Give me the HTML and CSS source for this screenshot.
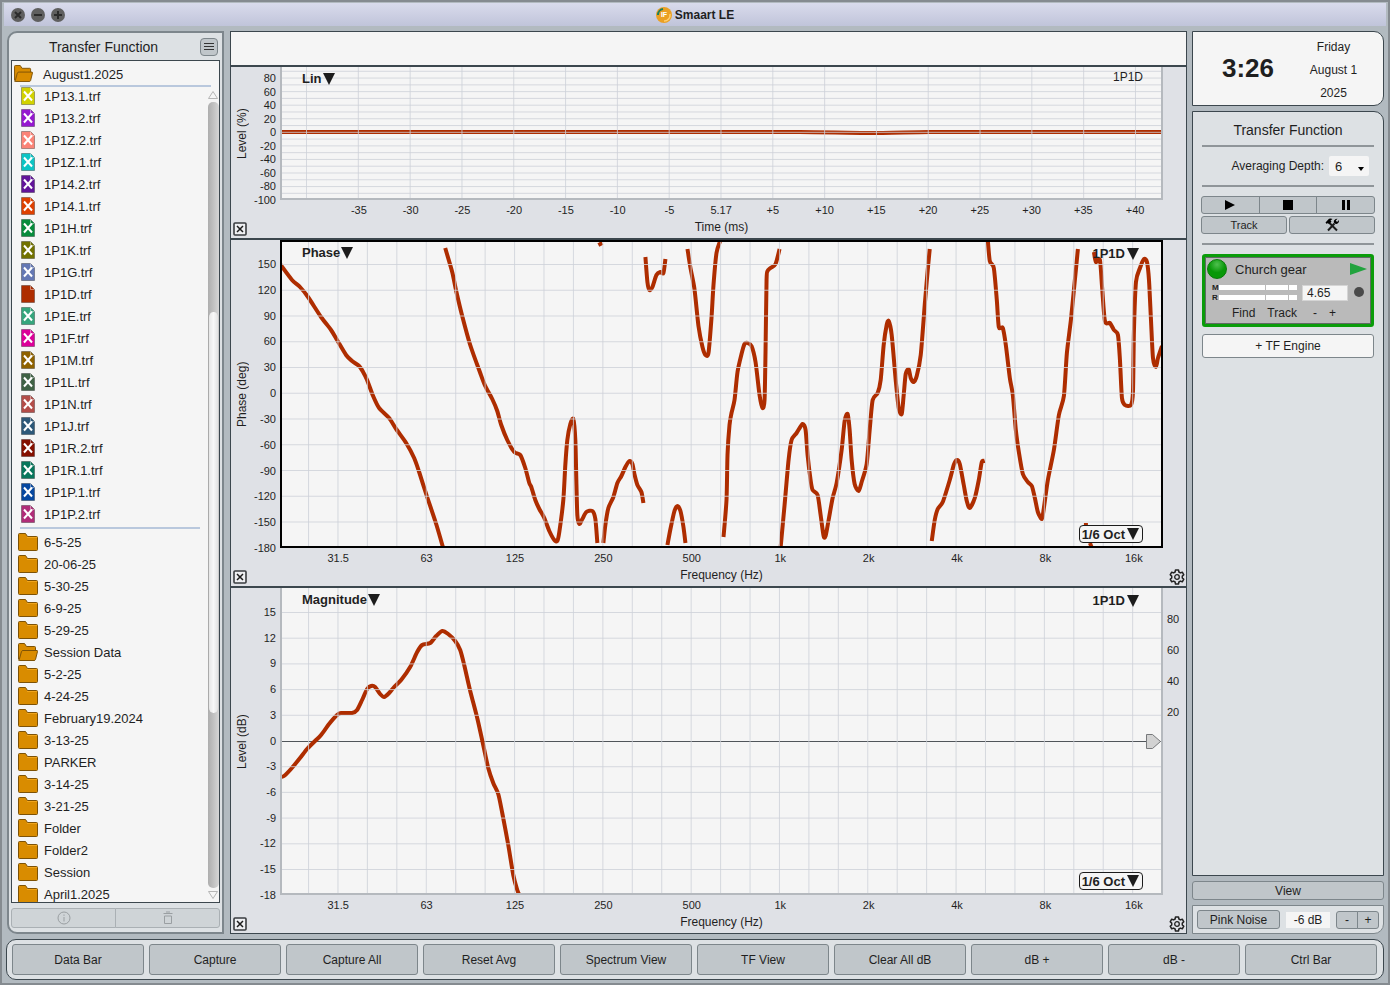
FILE: index.html
```html
<!DOCTYPE html>
<html lang="en">
<head>
    <meta charset="UTF-8">
    <title>Smaart LE</title>
    <link rel="stylesheet" href="styles.css">
</head>
<body>
    <!-- shared icons -->
    <svg class="sprite" aria-hidden="true">
        <symbol id="folder" viewBox="0 0 20 18">
            <path d="M.5 1.500q0-1 1-1h6l2 3h9q1 0 1 1v12q0 1-1 1h-17q-1 0-1-1z" fill="#d98c00" stroke="#7d5206"/>
            <path d="M9 4.500h10" stroke="#f0a51c"/>
        </symbol>
        <symbol id="folder-open" viewBox="0 0 20 18">
            <path d="M.5 16V1.500q0-1 1-1h5l2 3h8q1 0 1 1V8" fill="#d98c00" stroke="#7d5206"/>
            <path d="M1 17.500 3.500 8.500q.4-1 1.500-1h14q.7 0 .5 1L17.500 16.500q-.3 1-1.500 1H1.500q-1 0-1-1" fill="#d98c00" stroke="#7d5206"/>
        </symbol>
        <symbol id="close" viewBox="0 0 14 14">
            <rect x="1" y="1" width="12" height="12" rx="1" fill="#eeeff2" stroke="#3a3d40" stroke-width="1.600"/>
            <path d="M4 4l6 6M10 4l-6 6" stroke="#1c1c1c" stroke-width="1.500"/>
        </symbol>
        <symbol id="gear" viewBox="0 0 16 16">
            <path d="M6.500 1h3l.4 2 1.500.9 1.900-.7 1.500 2.600L13.300 7.100v1.800l1.500 1.300-1.500 2.600-1.900-.7-1.500.9-.4 2h-3l-.4-2-1.500-.9-1.900.7-1.500-2.600L2.700 8.900V7.100L1.200 5.800l1.500-2.600 1.900.7L6.100 3z" fill="none" stroke="#222" stroke-width="1.500" stroke-linejoin="round"/>
            <circle cx="8" cy="8" r="2.300" fill="none" stroke="#222" stroke-width="1.300"/>
        </symbol>
        <symbol id="down" viewBox="0 0 12 12">
            <path d="M0 0h12L6 12z" fill="#1c1c1c"/>
        </symbol>
    </svg>

    <header class="titlebar">
        <div class="window-buttons">
            <button aria-label="Close"><svg viewBox="0 0 14 14"><path d="M4 4l6 6M10 4l-6 6"/></svg></button>
            <button aria-label="Minimize"><svg viewBox="0 0 14 14"><path d="M3 7h8"/></svg></button>
            <button aria-label="Zoom"><svg viewBox="0 0 14 14"><path d="M3 7h8M7 3v8"/></svg></button>
        </div>
        <h1>
            <svg class="logo" viewBox="0 0 16 16">
                <circle cx="8" cy="8" r="8" fill="#eba023"/>
                <path d="M2 8a6 6 0 0 1 5-6" fill="none" stroke="#1b7f5f" stroke-width="2"/>
                <path d="M14 7a6 6 0 0 1-6 7" fill="none" stroke="#ffd070" stroke-width="1.500"/>
                <text x="8" y="10" text-anchor="middle">IF</text>
            </svg>
            Smaart LE
        </h1>
    </header>

    <main>
        <aside class="data-bar">
            <div class="data-head">
                <h2>Transfer Function</h2>
                <button class="menu" aria-label="Menu"><svg viewBox="0 0 10 10"><path d="M0 1.500h10M0 4.500h10M0 7.500h10"/></svg></button>
            </div>
            <div class="browser">
                <div class="session"><svg><use href="#folder-open"/></svg>August1.2025</div>
                <div class="scroll-area">
                    <div class="lists">
                        <ul id="files"></ul>
                        <ul id="folders"></ul>
                    </div>
                    <div class="scrollbar">
                        <svg viewBox="0 0 10 8"><path d="M5 .5 9.500 7.500H.5z"/></svg>
                        <div class="track"><div class="thumb"></div></div>
                        <svg viewBox="0 0 10 8"><path d="M5 7.500 9.500.5H.5z"/></svg>
                    </div>
                </div>
            </div>
            <div class="data-tools">
                <button disabled aria-label="Info"><svg viewBox="0 0 14 14"><circle cx="7" cy="7" r="6"/><path d="M7 6v4.500M7 3.500v1.300"/></svg></button>
                <button disabled aria-label="Delete"><svg viewBox="0 0 14 14"><path d="M2.500 2.500h9M5 1h4M3.500 5v7.500h7V5z"/></svg></button>
            </div>
        </aside>

        <section class="graphs">
            <div class="cursor-readout"></div>

            <div class="plot plot-lin">
                <div class="y-axis">
                    <span class="y-name">Level (%)</span>
                    <div class="y-ticks" data-ticks="80 60 40 20 0 -20 -40 -60 -80 -100"></div>
                </div>
                <div class="chart">
                    <svg id="lin" viewBox="281 67 882 133" preserveAspectRatio="none"></svg>
                    <button class="graph-type">Lin<svg><use href="#down"/></svg></button>
                    <span class="trace-name">1P1D</span>
                </div>
                <div class="x-ticks time" data-ticks="-35 -30 -25 -20 -15 -10 -5 5.17 +5 +10 +15 +20 +25 +30 +35 +40"></div>
                <button class="close" aria-label="Close graph"><svg><use href="#close"/></svg></button>
                <span class="x-name">Time (ms)</span>
            </div>

            <div class="plot selected">
                <div class="y-axis">
                    <span class="y-name">Phase (deg)</span>
                    <div class="y-ticks" data-ticks="150 120 90 60 30 0 -30 -60 -90 -120 -150 -180"></div>
                </div>
                <div class="chart">
                    <svg id="phase" viewBox="281 240 882 308" preserveAspectRatio="none"></svg>
                    <button class="graph-type">Phase<svg><use href="#down"/></svg></button>
                    <button class="trace">1P1D<svg><use href="#down"/></svg></button>
                    <button class="smoothing">1/6 Oct<svg><use href="#down"/></svg></button>
                </div>
                <div class="x-ticks" data-ticks="31.5 63 125 250 500 1k 2k 4k 8k 16k"></div>
                <button class="close" aria-label="Close graph"><svg><use href="#close"/></svg></button>
                <span class="x-name">Frequency (Hz)</span>
                <button class="gear" aria-label="Settings"><svg><use href="#gear"/></svg></button>
            </div>

            <div class="plot">
                <div class="y-axis">
                    <span class="y-name">Level (dB)</span>
                    <div class="y-ticks" data-ticks="15 12 9 6 3 0 -3 -6 -9 -12 -15 -18"></div>
                </div>
                <div class="chart">
                    <svg id="magnitude" viewBox="281 588 882 307" preserveAspectRatio="none"></svg>
                    <svg class="marker" viewBox="0 0 15 15"><path d="M.5.5h6L14.500 7.500 6.500 14.500h-6z"/></svg>
                    <button class="graph-type">Magnitude<svg><use href="#down"/></svg></button>
                    <button class="trace">1P1D<svg><use href="#down"/></svg></button>
                    <button class="smoothing">1/6 Oct<svg><use href="#down"/></svg></button>
                </div>
                <div class="coherence" data-ticks="80 60 40 20"></div>
                <div class="x-ticks" data-ticks="31.5 63 125 250 500 1k 2k 4k 8k 16k"></div>
                <button class="close" aria-label="Close graph"><svg><use href="#close"/></svg></button>
                <span class="x-name">Frequency (Hz)</span>
                <button class="gear" aria-label="Settings"><svg><use href="#gear"/></svg></button>
            </div>
        </section>

        <aside class="control-bar">
            <div class="clock">
                <strong>3:26</strong>
                <div class="date"><span>Friday</span><span>August 1</span><span>2025</span></div>
            </div>
            <div class="controls">
                <h2>Transfer Function</h2>
                <hr>
                <div class="averaging">
                    <label for="depth">Averaging Depth:</label>
                    <div class="select">
                        <select id="depth"><option>6</option><option>8</option><option>16</option></select>
                        <svg viewBox="0 0 6 4"><path d="M0 0h6L3 4z"/></svg>
                    </div>
                </div>
                <hr>
                <div class="transport">
                    <button aria-label="Play"><svg viewBox="0 0 10 10"><path d="M0 0l10 5-10 5z"/></svg></button>
                    <button aria-label="Stop"><svg viewBox="0 0 10 10"><path d="M0 0h10v10H0z"/></svg></button>
                    <button aria-label="Pause"><svg viewBox="0 0 10 10"><path d="M1 0h3v10H1zM6 0h3v10H6z"/></svg></button>
                </div>
                <div class="tools">
                    <button>Track</button>
                    <button aria-label="Tools">
                        <svg viewBox="0 0 14 14">
                            <path d="M3 12.500 9.500 5.500M4 4.500l8 8" fill="none" stroke="#1c1c1c" stroke-width="2"/>
                            <path d="M.5 4.500 4 .8q2-.8 3.500.2L5.500 2.500l1 1.200L4 6 2.800 4.900 1.800 6z"/>
                            <path d="M12.500.8 10.800 2.600l.6 1 1.100.2L14 2q.3 3-1.800 3.800-1.700.5-2.800-.6Q8.300 4 9.200 2.300 10.300.5 12.500.8z"/>
                        </svg>
                    </button>
                </div>
                <hr>
                <div class="engine">
                    <div class="engine-top">
                        <span class="led"></span>
                        <span class="engine-name">Church gear</span>
                        <button aria-label="Run"><svg viewBox="0 0 17 12"><path d="M0 0l17 6-17 6z" fill="#22a33e"/></svg></button>
                    </div>
                    <div class="engine-mid">
                        <div class="meters">
                            <b>M</b><i></i>
                            <b>R</b><i></i>
                        </div>
                        <input type="text" value="4.65" aria-label="Delay">
                        <span class="dot"></span>
                    </div>
                    <div class="engine-bottom">
                        <button>Find</button><button>Track</button><button>-</button><button>+</button>
                    </div>
                </div>
                <button class="add-engine">+ TF Engine</button>
            </div>
            <button class="view">View</button>
            <div class="generator">
                <button>Pink Noise</button>
                <output>-6 dB</output>
                <div class="step"><button>-</button><button>+</button></div>
            </div>
        </aside>
    </main>

    <footer>
        <button>Data Bar</button>
        <button>Capture</button>
        <button>Capture All</button>
        <button>Reset Avg</button>
        <button>Spectrum View</button>
        <button>TF View</button>
        <button>Clear All dB</button>
        <button>dB +</button>
        <button>dB -</button>
        <button>Ctrl Bar</button>
    </footer>

    <script src="script.js"></script>
</body>
</html>
```
FILE: styles.css
```css
* {
    box-sizing: border-box;
}

body {
    margin: 0;
    height: 100vh;
    display: flex;
    flex-direction: column;
    padding: 1px 4px 3px;
    border: 2px solid #858b90;
    background-color: #b2bac0;
    font-family: "Liberation Sans", Arial, sans-serif;
    font-size: 13px;
    color: #1f1f1f;
}

h1, h2, ul {
    margin: 0;
    padding: 0;
}

button, input, select {
    font: inherit;
    color: inherit;
    padding: 0;
    margin: 0;
}

button {
    display: flex;
    align-items: center;
    justify-content: center;
    background-color: #c0c6ca;
    border: 1px solid #7d868b;
    border-radius: 3px;
}

svg {
    display: block;
}

.sprite {
    position: absolute;
    width: 0;
    height: 0;
}

/* title bar */
.titlebar {
    flex: none;
    height: 23px;
    display: grid;
    grid-template-columns: 1fr auto 1fr;
    align-items: center;
    margin: 0 -2px 5px;
    padding: 0 7px;
    background: linear-gradient(#d9dbec, #c0c4da);
}

.window-buttons {
    display: flex;
    gap: 6px;
}

.window-buttons button {
    width: 14px;
    height: 14px;
    border: none;
    border-radius: 50%;
    background-color: #5f5f5f;
}

.window-buttons svg {
    width: 14px;
    height: 14px;
    stroke: #2b2b2b;
    stroke-width: 2;
}

.titlebar h1 {
    display: flex;
    align-items: center;
    gap: 3px;
    font-size: 12px;
}

.logo {
    width: 16px;
    height: 16px;
    font-size: 7px;
    font-weight: bold;
    fill: #fff;
}

main {
    flex: 1;
    min-height: 0;
    display: grid;
    grid-template-columns: 219px 1fr 192px;
    gap: 5px;
}

/* left side */
.data-bar {
    display: flex;
    flex-direction: column;
    min-height: 0;
    margin: 0 1px 0 1px;
    padding: 0 2px 4px;
    background-color: #dde1e4;
    border: 2px solid #7d868c;
    border-radius: 10px 0 0 10px;
}

.data-head {
    flex: none;
    display: flex;
    align-items: center;
    height: 27px;
    padding-right: 2px;
}

h2 {
    flex: 1;
    text-align: center;
    font-size: 14px;
    font-weight: normal;
}

.data-head h2 {
    padding-right: 4px;
}

.menu {
    width: 18px;
    height: 18px;
    border-radius: 4px;
}

.menu svg {
    width: 10px;
    height: 10px;
    stroke: #333;
}

.browser {
    flex: 1;
    min-height: 0;
    display: flex;
    flex-direction: column;
    background-color: #f5f5f5;
    border: 1px solid #3c474e;
}

.session {
    display: flex;
    align-items: center;
    gap: 10px;
    flex: none;
    height: 26px;
    margin: 0 8px 0 0;
    padding-left: 2px;
    background: linear-gradient(#b9c8dd, #b9c8dd) 8px 100% / 100% 2px no-repeat;
}

.session svg {
    width: 19px;
    height: 17px;
    margin-bottom: 2px;
}

.scroll-area {
    flex: 1;
    min-height: 0;
    display: flex;
}

.lists {
    flex: 1;
    margin-top: -2px;
    overflow: hidden;
}

.lists ul {
    list-style: none;
}

.lists li {
    display: flex;
    align-items: center;
    gap: 6px;
    height: 22px;
    padding-left: 6px;
}

#files li {
    gap: 9px;
    padding-left: 9px;
}

#files {
    margin: 0 8px 2px 0;
    padding-bottom: 4px;
    background: linear-gradient(#b9c8dd, #b9c8dd) 8px 100% / 100% 2px no-repeat;
}

#folders svg {
    width: 20px;
    height: 18px;
}

#files svg {
    width: 14px;
    height: 18px;
}

.scrollbar {
    display: flex;
    flex-direction: column;
    width: 11px;
    padding: 4px 0 3px;
}

.scrollbar svg {
    width: 10px;
    height: 8px;
    fill: none;
    stroke: #b5b5b5;
}

.track {
    flex: 1;
    margin: 3px 0;
    border-radius: 5px;
    background: linear-gradient(90deg, #adadad, #d6d6d6);
}

.thumb {
    height: 51%;
    margin-top: 210px;
    border-radius: 5px;
    border-left: 1px solid #aaa;
    border-right: 1px solid #ccc;
    background: linear-gradient(90deg, #e6e6e6, #f8f8f8, #e2e2e2);
}

.data-tools {
    flex: none;
    display: flex;
    margin-top: 5px;
}

.data-tools button {
    flex: 1;
    height: 20px;
    background-color: #cfd4d7;
    border-color: #aab0b4;
}

.data-tools svg {
    width: 14px;
    height: 14px;
    fill: none;
    stroke: #9a9fa2;
}

.data-tools button:first-child, .step button:first-child {
    border-radius: 3px 0 0 3px;
}

.data-tools button:last-child, .step button:last-child {
    margin-left: -1px;
    border-radius: 0 3px 3px 0;
}

/* graphs */
.graphs {
    display: grid;
    grid-template-rows: 35px 171fr 348fr 347fr;
    min-height: 0;
    background-color: #dfe1e6;
    border: 1px solid #3c474e;
}

.cursor-readout {
    background-color: #f5f5f5;
    border-bottom: 2px solid #3c474e;
}

.plot {
    display: grid;
    grid-template-columns: 49px 1fr 23px;
    grid-template-rows: 1fr 20px 18px;
    min-height: 0;
    font-size: 11px;
}

.plot + .plot {
    border-top: 2px solid #3c474e;
}

.y-axis {
    display: flex;
    min-height: 0;
}

.y-name {
    width: 22px;
    display: flex;
    align-items: center;
    justify-content: center;
    writing-mode: vertical-rl;
    transform: rotate(180deg);
    font-size: 12px;
}

.y-ticks {
    flex: 1;
    display: flex;
    flex-direction: column;
    justify-content: space-between;
    margin: 17px 4px -7px 0;
    line-height: 14px;
    text-align: right;
}

.plot-lin .y-ticks {
    margin-top: 5px;
    line-height: 13px;
}

.chart {
    position: relative;
    min-height: 0;
    overflow: hidden;
    background-color: #f5f5f5;
    border: 2px solid #b5b9be;
    border-top: none;
    font-size: 13px;
}

.selected .chart {
    border: 2px solid #000;
}

.chart > svg:first-child {
    position: absolute;
    top: 0;
    left: -2px;
    width: calc(100% + 4px);
    height: calc(100% + 2px);
}

.selected .chart > svg:first-child {
    top: -2px;
    height: calc(100% + 4px);
}

.chart path, .chart line {
    vector-effect: non-scaling-stroke;
}

.curve {
    fill: none;
    stroke: #ae2d00;
    stroke-width: 4;
}

.grid {
    stroke: #cdd1d8;
    stroke-opacity: 0.8;
}

.zero {
    stroke: #50555a;
    shape-rendering: crispEdges;
}

.chart button {
    position: absolute;
    gap: 1px;
    background: none;
    border: none;
    font-weight: bold;
}

.chart button svg {
    width: 12px;
    height: 12px;
}

.chart .graph-type {
    top: 4px;
    left: 20px;
}

.chart .trace {
    top: 5px;
    right: 22px;
    gap: 2px;
}

.selected .graph-type, .selected .trace {
    margin-top: -1px;
}

.trace-name {
    position: absolute;
    top: 3px;
    right: 18px;
    font-size: 12px;
}

.chart .smoothing {
    right: 18px;
    bottom: 3px;
    height: 18px;
    padding: 0 3px 0 2px;
    gap: 2px;
    background-color: #f5f5f5;
    border: 1px solid #1c1c1c;
    border-radius: 4px;
}

.marker {
    position: absolute;
    top: 50%;
    right: 0;
    width: 15px;
    height: 15px;
    margin-top: -7px;
    fill: #d2d2d2;
    stroke: #77797b;
}

.coherence {
    display: flex;
    flex-direction: column;
    gap: 17px;
    margin-top: 24px;
    padding-left: 4px;
    line-height: 14px;
}

.x-ticks {
    grid-row: 2;
    grid-column: 1 / -1;
    display: grid;
    grid-template-columns: repeat(10, 1fr);
    padding: 0 8px 0 63px;
    line-height: 20px;
    text-align: center;
}

.x-ticks.time {
    grid-template-columns: repeat(16, 1fr);
    padding: 0 25px 0 102px;
}

.x-name {
    grid-row: 3;
    grid-column: 2;
    text-align: center;
    line-height: 14px;
    font-size: 12px;
}

.close, .gear {
    grid-row: 3;
    background: none;
    border: none;
    align-items: flex-start;
}

.close {
    grid-column: 1;
    justify-content: flex-start;
    padding: 2px 0 0 2px;
}

.close svg {
    width: 14px;
    height: 14px;
}

.gear {
    grid-column: 3;
    padding: 1px 0 0 4px;
}

.gear svg {
    width: 16px;
    height: 16px;
}

/* right side */
.control-bar {
    display: flex;
    flex-direction: column;
    gap: 5px;
    min-height: 0;
}

.clock {
    display: flex;
    align-items: center;
    height: 75px;
    padding-left: 14px;
    background-color: #f5f5f5;
    border: 1px solid #3c474e;
    border-radius: 0 10px 10px 0;
}

.clock strong {
    width: 82px;
    text-align: center;
    font-size: 26px;
}

.date {
    flex: 1;
    display: flex;
    flex-direction: column;
    padding: 4px 5px 0 0;
    text-align: center;
    line-height: 23px;
    font-size: 12px;
}

.controls {
    flex: 1;
    min-height: 0;
    display: flex;
    flex-direction: column;
    padding: 8px 9px 0;
    background-color: #dde1e4;
    border: 1px solid #3c474e;
    border-radius: 0 10px 0 0;
}

.controls h2 {
    flex: none;
    line-height: 21px;
}

.controls hr {
    width: 100%;
    margin: 4px 0 9px;
    border: none;
    border-top: 2px solid #8f9599;
}

.averaging {
    display: flex;
    align-items: center;
    justify-content: flex-end;
    gap: 5px;
    height: 20px;
    margin-bottom: 5px;
    padding-right: 5px;
    font-size: 12px;
}

.select {
    position: relative;
}

.select select {
    width: 40px;
    height: 20px;
    padding-left: 6px;
    appearance: none;
    border: none;
    border-radius: 2px;
    background-color: #f5f5f5;
    font-size: 13px;
}

.select svg {
    position: absolute;
    right: 5px;
    bottom: 5px;
    width: 6px;
    height: 4px;
}

.transport {
    display: flex;
    margin: 0 -1px 2px;
}

.transport button {
    flex: 1;
    height: 18px;
    border-radius: 0;
}

.transport button + button {
    margin-left: -1px;
}

.transport button:first-child {
    border-radius: 3px 0 0 3px;
}

.transport button:last-child {
    border-radius: 0 3px 3px 0;
}

.transport svg {
    width: 10px;
    height: 10px;
}

.tools {
    display: flex;
    gap: 2px;
    margin: 0 -1px 5px;
}

.tools button {
    flex: 1;
    height: 18px;
    font-size: 11px;
}

.tools svg {
    width: 14px;
    height: 14px;
}

.engine {
    display: flex;
    flex-direction: column;
    height: 73px;
    padding: 1px 4px;
    background-color: #bababa;
    border: 3px solid #0a9c0a;
    border-radius: 3px;
    box-shadow: inset 0 0 0 1px #5f6a64;
}

.engine button {
    background: none;
    border: none;
}

.engine-top {
    display: flex;
    align-items: center;
    height: 22px;
}

.led {
    width: 20px;
    height: 20px;
    margin-left: -2px;
    border-radius: 50%;
    border: 1px solid #077a07;
    background: radial-gradient(circle at 50% 25%, #4fc04f, #089808 50%);
}

.engine-name {
    flex: 1;
    padding-left: 8px;
}

.engine-top svg {
    width: 17px;
    height: 12px;
}

.engine-mid {
    display: flex;
    align-items: center;
    height: 24px;
    padding-left: 3px;
}

.meters {
    display: grid;
    grid-template-columns: 7px 78px;
    row-gap: 5px;
    line-height: 5px;
    font-size: 8px;
}

.meters i {
    height: 5px;
    background: linear-gradient(90deg, #fff 46px, #bababa 46px, #bababa 47px, #fff 47px, #fff 69px, #bababa 69px, #bababa 70px, #fff 70px);
}

.engine-mid input {
    width: 46px;
    height: 16px;
    margin: 2px 6px 0 5px;
    padding-left: 4px;
    border: 1px solid #d5d5d5;
    background-color: #f5f5f5;
    font-size: 12px;
}

.dot {
    width: 10px;
    height: 10px;
    border-radius: 50%;
    background-color: #4a4a4a;
}

.engine-bottom {
    display: flex;
    gap: 12px;
    padding: 1px 0 0 23px;
    line-height: 16px;
    font-size: 12px;
}

.engine-bottom button:nth-child(3) {
    padding-left: 4px;
}

.add-engine {
    flex: none;
    height: 24px;
    margin-top: 7px;
    background-color: #f5f5f5;
    font-size: 12px;
}

.view {
    flex: none;
    height: 19px;
    font-size: 12px;
}

.generator {
    flex: none;
    display: flex;
    align-items: center;
    justify-content: space-between;
    height: 29px;
    padding: 0 4px;
    background-color: #dde1e4;
    border: 1px solid #7d868b;
    border-radius: 0 0 10px 0;
    font-size: 12px;
}

.generator > button {
    width: 83px;
    height: 19px;
}

.generator output {
    width: 44px;
    line-height: 16px;
    text-align: center;
    background-color: #f5f5f5;
}

.step {
    display: flex;
}

.step button {
    width: 22px;
    height: 18px;
}

footer {
    flex: none;
    display: flex;
    gap: 5px;
    height: 41px;
    margin-top: 5px;
    padding: 4px 6px 4px 5px;
    background-color: #dde1e4;
    border: 1px solid #3c474e;
    border-radius: 10px;
}

footer button {
    flex: 1;
    font-size: 12px;
}
```
FILE: script.js
```js
const files = [
    ['1P13.1.trf', '#d2d200'], ['1P13.2.trf', '#9518d0'], ['1P1Z.2.trf', '#fb8377'],
    ['1P1Z.1.trf', '#0cc4c4'], ['1P14.2.trf', '#62149a'], ['1P14.1.trf', '#de4000'],
    ['1P1H.trf', '#078c3c'], ['1P1K.trf', '#727200'], ['1P1G.trf', '#6478b4'],
    ['1P1D.trf', '#ae2d00'], ['1P1E.trf', '#35a57c'], ['1P1F.trf', '#dc0099'],
    ['1P1M.trf', '#8f6200'], ['1P1L.trf', '#3f6245'], ['1P1N.trf', '#b34d49'],
    ['1P1J.trf', '#2d5878'], ['1P1R.2.trf', '#851000'], ['1P1R.1.trf', '#08775c'],
    ['1P1P.1.trf', '#0648a0'], ['1P1P.2.trf', '#b02c78']
];

const folders = [
    '6-5-25', '20-06-25', '5-30-25', '6-9-25', '5-29-25', 'Session Data', '5-2-25', '4-24-25',
    'February19.2024', '3-13-25', 'PARKER', '3-14-25', '3-21-25', 'Folder', 'Folder2', 'Session', 'April1.2025'
];

// 1P1D is the one shown in the graphs, so it has no X
document.getElementById('files').innerHTML = files.map(([name, color]) => `
    <li><svg viewBox="0 0 14 18">
        <path d="M.5.5h9l4 4v13H.5z" fill="${color}" stroke="#000" stroke-opacity=".3"/>
        <path d="M9.500.5v4h4" fill="none" stroke="#fff" stroke-opacity=".45"/>
        ${name === '1P1D.trf' ? '' : '<path d="M3 4.500l8 9M11 4.500l-8 9" stroke="#fff" stroke-width="2"/>'}
    </svg>${name}</li>`).join('');

document.getElementById('folders').innerHTML = folders.map(name =>
    `<li><svg><use href="#${name === 'Session Data' ? 'folder-open' : 'folder'}"/></svg>${name}</li>`).join('');

document.querySelectorAll('[data-ticks]').forEach(el => {
    el.innerHTML = el.dataset.ticks.split(' ').map(t => `<span>${t}</span>`).join('');
});

const phase = [
    '281,264 293,280 301,287 309,297 322,317 332,330 338,340 347,355 353,361 360,366 364,372 368,380 374,396 380,408 390,418 397,429 407,443 415,458 420,472 427,494 437,524 444,548',
    '446,248 453,272 457,291 463,316 471,345 481,373 486,386 493,399 498,411 502,425 508,440 515,452 521,455 526,468 530,483 532,487 536,500 540,509 545,518 550,531 555,540 558,541 560,532 564,500 566,465 568,440 571,424 574,419 576,440 577,480 578,515 580,524 583,519 587,512 593,511 596,519 598,543',
    '604,543 606,525 609,508 614,497 618,483 622,476 626,467 630,461 633,464 635,474 638,485 642,492 644,503',
    '599,245 603,243',
    '646,257 648,282 650,290 653,287 657,275 661,272 664,273 666,259',
    '668,545 671,529 675,511 678,506 681,511 684,527 686,543',
    '688,249 691,268 695,289 699,326 703,347 706,355 709,353 712,318 714,285 717,253 721,240',
    '724,537 727,500 728,455 730,425 732,413 735,400 738,372 742,354 745,344 748,343 752,346 756,362 760,395 763,408 765,400 766,350 767,280 768,271 771,268 776,264 780,249',
    '781,548 785,505 789,460 792,440 797,433 803,424 806,430 808,455 811,480 813,490 818,495 821,515 824,536 826,536 829,520 833,498 837,483 842,450 845,421 848,414 850,430 852,460 855,484 859,491 862,482 867,464 870,430 873,400 878,393 881,380 884,345 887,325 889,321 892,335 896,380 899,408 902,414 904,395 906,374 909,369 911,378 914,382 917,376 921,355 925,305 928,270 930,249',
    '932,541 935,520 938,509 943,502 950,480 954,465 957,460 960,464 964,485 967,501 970,508 975,498 979,480 982,462 985,461',
    '988,240 990,261 994,268 997,300 999,327 1003,328 1006,345 1010,378 1013,395 1016,430 1019,452 1023,474 1028,482 1032,486 1035,498 1038,512 1042,519 1044,508 1048,480 1054,450 1059,415 1064,396 1067,353 1071,320 1074,290 1078,249',
    '1094,252 1096,262 1100,260 1102,285 1105,321 1110,323 1114,330 1118,335 1120,360 1122,398 1125,405 1131,405 1133,392 1134,330 1136,282 1140,268 1144,259 1147,262 1149,280 1151,320 1153,358 1156,367 1158,358 1162,346',
    '1084,525 1088,525',
    '1090,543 1092,548'
];

const magnitude = [
    '281,777 285,776 292,769 301,758 308,749 316,741 322,735 330,724 338,715 342,713 353,713 358,710 363,700 368,689 372,686 376,687 381,694 385,697 390,693 395,687 402,680 411,667 418,652 423,645 431,643 437,636 443,631 449,634 456,641 461,650 465,665 471,691 478,718 484,745 489,768 494,783 499,794 503,813 509,845 514,875 518,890 521,897'
];

const lin = ['281,132 500,132 700,132 800,132 870,133 930,132 1000,132 1163,132'];

// smooth curve through all the points
function curve(text) {
    const p = text.split(' ').map(s => s.split(',').map(Number));
    let d = `M${p[0]}`;
    for (let i = 0; i < p.length - 1; i++) {
        const a = p[i - 1] || p[i], b = p[i], c = p[i + 1], e = p[i + 2] || c;
        d += `C${b[0] + (c[0] - a[0]) / 8},${b[1] + (c[1] - a[1]) / 8} ${c[0] - (e[0] - b[0]) / 8},${c[1] - (e[1] - b[1]) / 8} ${c}`;
    }
    return `<path class="curve" d="${d}"/>`;
}

function draw(id, curves, grid, zero) {
    const svg = document.getElementById(id);
    const box = svg.viewBox.baseVal;
    const right = box.x + box.width;
    const bottom = box.y + box.height;
    let html = zero ? `<line class="zero" x1="${box.x}" x2="${right}" y1="${zero}" y2="${zero}"/>` : '';
    html += curves.map(curve).join('');
    for (let x = grid.x; x < right - 2; x += grid.dx) {
        html += `<line class="grid" x1="${x}" x2="${x}" y1="${box.y}" y2="${bottom}"/>`;
    }
    for (let y = grid.y; y < bottom - 3; y += grid.dy) {
        if (zero && Math.abs(y - zero) < 2) continue;
        html += `<line class="grid" x1="${box.x}" x2="${right}" y1="${y}" y2="${y}"/>`;
    }
    svg.innerHTML = html;
}

draw('lin', lin, { x: 307.5, dx: 51.75, y: 71.3, dy: 6.78 });
draw('phase', phase, { x: 309.5, dx: 29.4, y: 264.5, dy: 25.75 });
draw('magnitude', magnitude, { x: 309.5, dx: 29.4, y: 612.5, dy: 25.7 }, 741.5);
```
